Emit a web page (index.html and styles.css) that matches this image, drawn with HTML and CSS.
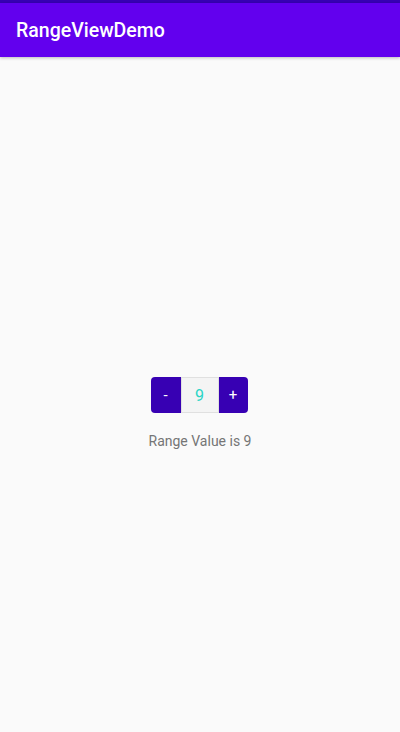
FILE: index.html
```html
<!DOCTYPE html>
<html>
<head>
<meta charset="utf-8">
<link rel="stylesheet" href="styles.css">
</head>
<body>
<div class="status"></div>
<header class="appbar"><span class="title">RangeViewDemo</span></header>
<main class="content">
  <div class="range">
    <button class="btn btn-left">-</button>
    <div class="value">9</div>
    <button class="btn btn-right">+</button>
  </div>
  <p class="label">Range Value is 9</p>
</main>
</body>
</html>
```

FILE: styles.css
```css
html, body {
  margin: 0;
  padding: 0;
  background: #fafafa;
  font-family: Roboto, "Noto Sans", sans-serif;
}
body {
  width: 400px;
  height: 732px;
  display: flex;
  flex-direction: column;
  overflow: hidden;
}
.status {
  height: 3px;
  background: #3700b3;
}
.appbar {
  height: 54px;
  background: #6200ee;
  display: flex;
  align-items: center;
  padding-left: 16px;
  box-shadow: 0 1px 3px rgba(0,0,0,0.25);
  position: relative;
  z-index: 1;
}
.title {
  color: #fff;
  font-size: 19.5px;
  font-weight: 500;
}
.content {
  flex: 1;
  display: flex;
  flex-direction: column;
  align-items: center;
  padding-top: 320px;
}
.range {
  display: flex;
  height: 36px;
  margin-right: 2px;
}
.btn {
  border: none;
  margin: 0;
  padding: 0;
  width: 30px;
  background: #3700b3;
  color: #fff;
  font-family: Roboto, sans-serif;
  font-size: 15px;
  font-weight: 400;
}
.btn-left { border-radius: 4px 0 0 4px; }
.btn-right { border-radius: 0 4px 4px 0; width: 29px; }
.value {
  width: 36px;
  border: 1px solid #e0e0e0;
  background: #f4f4f4;
  display: flex;
  align-items: center;
  justify-content: center;
  color: #2ad4c6;
  font-size: 16px;
}
.label {
  margin: 20px 0 0;
  font-size: 14px;
  color: #757575;
}
```
